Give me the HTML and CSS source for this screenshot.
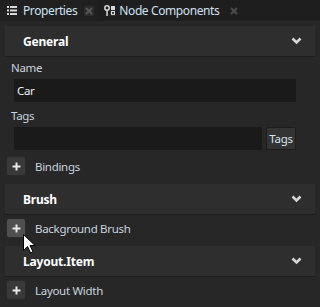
FILE: index.html
```html
<!DOCTYPE html>
<html>
<head>
<meta charset="utf-8">
<link rel="stylesheet" href="styles.css">
</head>
<body>
<div class="app">
  <div class="tabs">
    <div class="tab active">
      <svg class="tab-icon" width="10" height="9" viewBox="0 0 10 9"><rect x="0" y="0" width="2" height="2" fill="#d8d8d8"/><rect x="3" y="0" width="7" height="2" fill="#d8d8d8"/><rect x="0" y="3.5" width="2" height="2" fill="#d8d8d8"/><rect x="3" y="3.5" width="7" height="2" fill="#d8d8d8"/><rect x="0" y="7" width="2" height="2" fill="#d8d8d8"/><rect x="3" y="7" width="7" height="2" fill="#d8d8d8"/></svg>
      <span class="tab-label">Properties</span>
      <span class="tab-close boxed"><svg width="8" height="8" viewBox="0 0 8 8"><path d="M1 1L7 7M7 1L1 7" stroke="#555" stroke-width="2"/></svg></span>
    </div>
    <div class="tab second">
      <svg class="tab-icon" width="11" height="11" viewBox="0 0 11 11"><circle cx="3" cy="3" r="2.2" fill="none" stroke="#d8d8d8" stroke-width="1.5"/><rect x="2.3" y="5" width="1.5" height="6" fill="#d8d8d8"/><rect x="7" y="1" width="4" height="4" fill="#d8d8d8"/><rect x="7.5" y="6.5" width="3" height="3" fill="none" stroke="#d8d8d8" stroke-width="1.2"/></svg>
      <span class="tab-label">Node Components</span>
      <span class="tab-close wide"><svg width="8" height="8" viewBox="0 0 8 8"><path d="M1 1L7 7M7 1L1 7" stroke="#4c4c4c" stroke-width="2"/></svg></span>
    </div>
  </div>
  <div class="panel">
    <section class="group">
      <div class="group-head"><span class="group-title">General</span><svg class="chev" width="11" height="8" viewBox="0 0 11 8"><path d="M1.5 1.5L5.5 5.5L9.5 1.5" fill="none" stroke="#d6d6d6" stroke-width="2.6"/></svg></div>
      <div class="field">
        <div class="field-label">Name</div>
        <div class="input">Car</div>
      </div>
      <div class="field">
        <div class="field-label">Tags</div>
        <div class="input-row"><div class="input"></div><div class="btn">Tags</div></div>
      </div>
      <div class="add-row first"><span class="plus"><svg width="9" height="9" viewBox="0 0 9 9"><path d="M4.5 0.5V8.5M0.5 4.5H8.5" stroke="#e8e8e8" stroke-width="2"/></svg></span><span class="add-label">Bindings</span></div>
    </section>
    <section class="group">
      <div class="group-head"><span class="group-title">Brush</span><svg class="chev" width="11" height="8" viewBox="0 0 11 8"><path d="M1.5 1.5L5.5 5.5L9.5 1.5" fill="none" stroke="#d6d6d6" stroke-width="2.6"/></svg></div>
      <div class="add-row"><span class="plus hover"><svg width="9" height="9" viewBox="0 0 9 9"><path d="M4.5 0.5V8.5M0.5 4.5H8.5" stroke="#e8e8e8" stroke-width="2"/></svg></span><span class="add-label">Background Brush</span></div>
    </section>
    <section class="group">
      <div class="group-head"><span class="group-title">Layout.Item</span><svg class="chev" width="11" height="8" viewBox="0 0 11 8"><path d="M1.5 1.5L5.5 5.5L9.5 1.5" fill="none" stroke="#d6d6d6" stroke-width="2.6"/></svg></div>
      <div class="add-row"><span class="plus"><svg width="9" height="9" viewBox="0 0 9 9"><path d="M4.5 0.5V8.5M0.5 4.5H8.5" stroke="#e8e8e8" stroke-width="2"/></svg></span><span class="add-label">Layout Width</span></div>
    </section>
  </div>
  <svg class="cursor" width="13" height="20" viewBox="0 0 13 20"><path d="M0.5 0.5L0.5 16.5L4.5 12.5L7.5 18.8L10 17.7L7 11.5L12 11.5Z" fill="#fff" stroke="#000" stroke-width="1"/></svg>
</div>
</body>
</html>
```
FILE: styles.css
```css
* { box-sizing: border-box; }
html, body { margin: 0; padding: 0; background: #272727; }
body { font-family: "Noto Sans", "Open Sans", sans-serif; font-size: 11.5px; letter-spacing: -0.3px; color: #cfcfcf; }
.app { position: relative; width: 320px; height: 307px; overflow: hidden; background: #272727; }

.tabs { display: flex; height: 21px; background: #1e1e1e; }
.tab { display: flex; align-items: center; height: 21px; padding: 0 5px 0 7px; color: #cfe0f0; }
.tab.active { background: #202020; }
.tab.second { padding-left: 5px; }
.tab-icon { flex: none; margin-right: 6px; }
.tab.second .tab-icon { margin-right: 4px; }
.tab-label { white-space: nowrap; font-size: 12px; letter-spacing: -0.4px; }
.tab-close { display: flex; align-items: center; justify-content: center; width: 10px; height: 10px; margin-left: 7px; }
.tab-close.wide { margin-left: 10px; }
.tab-close.boxed { background: #2b2b2b; }

.panel { padding: 5px 5px 0 5px; }
.group-head { display: flex; align-items: center; justify-content: space-between; height: 31px; background: #2e2e2e; border-bottom: 1px solid #1d1d1d; padding: 0 13px 0 18px; }
.group-title { font-weight: 700; color: #fff; font-size: 12px; letter-spacing: -0.2px; }
.chev { display: block; }

.field { padding: 3px 19px 0 6px; }
.field + .field { padding-top: 6px; }
.field-label { height: 16px; line-height: 16px; margin-bottom: 3px; color: #c9d3de; }
.input { height: 23px; line-height: 23px; background: #1a1a1a; padding-left: 3px; margin-left: 3px; color: #f0f0f0; }
.input-row { display: flex; align-items: center; gap: 4px; margin-left: 3px; }
.input-row .input { flex: 1; margin-left: 0; }
.btn { width: 30px; height: 23px; line-height: 21px; text-align: center; background: #333; border: 1px solid #1c1c1c; border-radius: 2px; color: #d7e4f0; }

.add-row { display: flex; align-items: center; margin: 3px 0 8px 0; }
.add-row.first { margin-top: 6px; margin-bottom: 8px; }
.plus { display: flex; align-items: center; justify-content: center; width: 20px; height: 20px; margin-left: 1px; background: #393939; border: 1px solid #2a2a2a; border-radius: 3px; }
.plus svg { display: block; }
.plus.hover { background: #4f4f4f; }
.add-label { margin-left: 9px; color: #c9d3de; }

.cursor { position: absolute; left: 23px; top: 234px; }
```
